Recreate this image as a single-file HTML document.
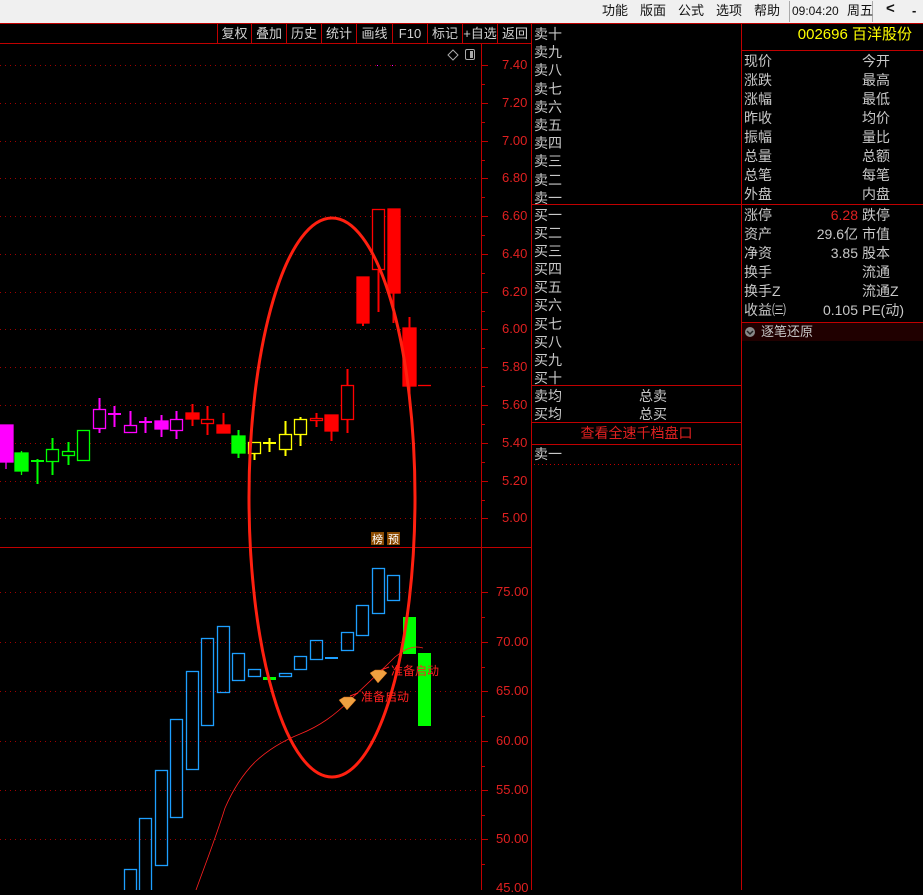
<!DOCTYPE html>
<html><head><meta charset="utf-8">
<style>
*{margin:0;padding:0;box-sizing:border-box}
body{width:923px;height:890px;background:#000;overflow:hidden;position:relative;font-family:"Liberation Sans","Noto Sans CJK SC",sans-serif;font-size:13px;color:#c8c8c8}
.a{position:absolute;white-space:nowrap;line-height:16px}
#top{position:absolute;left:0;top:0;width:923px;height:23px;background:#f0f0f0;color:#111}
#top span{position:absolute;top:3px;font-size:13px;line-height:16px}
.tb{position:absolute;top:24px;height:19px;line-height:19px;font-size:13px;color:#d0d0d0;text-align:center;border-left:1px solid #c00000}
.r{color:#e02020}
.ax{position:absolute;left:502px;font-size:13px;color:#e02020;line-height:14px}
</style></head><body>
<div id="top">
<span style="left:602px">功能</span><span style="left:640px">版面</span><span style="left:678px">公式</span><span style="left:716px">选项</span><span style="left:754px">帮助</span>
<div style="position:absolute;left:789px;top:1px;width:84px;height:21px;border-left:1px solid #aaa;border-right:1px solid #aaa"></div>
<span style="left:792px;font-size:12px">09:04:20</span><span style="left:847px">周五</span>
<span style="left:886px;font-weight:bold;font-size:15px;top:1px">&lt;</span><span style="left:912px;font-weight:bold">-</span>
</div>

<svg style="position:absolute;left:0;top:0" width="923" height="890">
<g stroke="#c00000" stroke-width="1" fill="none">
<line x1="0" y1="23.5" x2="923" y2="23.5"/>
<line x1="0" y1="43.5" x2="532" y2="43.5"/>
<line x1="481.5" y1="43" x2="481.5" y2="890"/>
<line x1="531.5" y1="23" x2="531.5" y2="890"/>
<line x1="741.5" y1="23" x2="741.5" y2="890"/>
<line x1="0" y1="547.5" x2="532" y2="547.5"/>
<line x1="741" y1="50.5" x2="923" y2="50.5"/>
<line x1="532" y1="204.5" x2="923" y2="204.5"/>
<line x1="532" y1="385.5" x2="741" y2="385.5"/>
<line x1="532" y1="422.5" x2="741" y2="422.5"/>
<line x1="532" y1="444.5" x2="741" y2="444.5"/>
<line x1="741" y1="322.5" x2="923" y2="322.5"/>
</g>
<rect x="742" y="323" width="181" height="18" fill="#200000"/>
<circle cx="750" cy="332" r="5" fill="#888"/><path d="M747 331l3 3 3-3" stroke="#222" stroke-width="1.5" fill="none"/>
<line x1="534" y1="464.5" x2="740" y2="464.5" stroke="#c00000" stroke-dasharray="1 3"/>
<g stroke="#a00000" stroke-dasharray="1 4">
<line x1="0" y1="65.5" x2="480" y2="65.5"/><line x1="0" y1="103.5" x2="480" y2="103.5"/><line x1="0" y1="141.5" x2="480" y2="141.5"/><line x1="0" y1="178.5" x2="480" y2="178.5"/><line x1="0" y1="216.5" x2="480" y2="216.5"/><line x1="0" y1="254.5" x2="480" y2="254.5"/><line x1="0" y1="292.5" x2="480" y2="292.5"/><line x1="0" y1="329.5" x2="480" y2="329.5"/><line x1="0" y1="367.5" x2="480" y2="367.5"/><line x1="0" y1="405.5" x2="480" y2="405.5"/><line x1="0" y1="443.5" x2="480" y2="443.5"/><line x1="0" y1="481.5" x2="480" y2="481.5"/><line x1="0" y1="518.5" x2="480" y2="518.5"/>
<line x1="0" y1="592.5" x2="480" y2="592.5"/><line x1="0" y1="642.5" x2="480" y2="642.5"/><line x1="0" y1="691.5" x2="480" y2="691.5"/><line x1="0" y1="741.5" x2="480" y2="741.5"/><line x1="0" y1="790.5" x2="480" y2="790.5"/><line x1="0" y1="839.5" x2="480" y2="839.5"/>
</g>
<g stroke="#c00000">
<path d="M482 65.5h6M482 84.5h3M482 103.5h6M482 122.5h3M482 141.5h6M482 160.5h3M482 178.5h6M482 197.5h3M482 216.5h6M482 235.5h3M482 254.5h6M482 273.5h3M482 292.5h6M482 311.5h3M482 329.5h6M482 348.5h3M482 367.5h6M482 386.5h3M482 405.5h6M482 424.5h3M482 443.5h6M482 462.5h3M482 481.5h6M482 500.5h3M482 518.5h6"/>
<path d="M482 592.5h6M482 617.5h3M482 642.5h6M482 667.5h3M482 691.5h6M482 716.5h3M482 741.5h6M482 766.5h3M482 790.5h6M482 815.5h3M482 839.5h6M482 864.5h3"/>
</g>
<g stroke-width="1.3">
<g fill="#ff00ff" stroke="#ff00ff"><line x1="6" y1="462" x2="6" y2="469"/><rect x="0" y="425" width="13" height="37"/></g>
<g fill="#00ff00" stroke="#00ff00"><line x1="21.5" y1="451" x2="21.5" y2="475"/><rect x="15" y="453" width="13" height="18"/>
<line x1="37.5" y1="459" x2="37.5" y2="484" stroke-width="2"/><line x1="31" y1="461" x2="44" y2="461" stroke-width="2"/>
<line x1="52.5" y1="438" x2="52.5" y2="475" stroke-width="2"/><rect x="46.5" y="449.5" width="12" height="12" fill="#000"/>
<line x1="68.5" y1="442" x2="68.5" y2="465" stroke-width="2"/><rect x="62.5" y="451.5" width="12" height="4" fill="#000"/>
<rect x="77.5" y="430.5" width="12" height="30" fill="#000"/></g>
<g stroke="#ff00ff" fill="#000">
<line x1="99.5" y1="398" x2="99.5" y2="433" stroke-width="2"/><rect x="93.5" y="409.5" width="12" height="19"/>
<line x1="114.5" y1="406" x2="114.5" y2="427" stroke-width="2"/><line x1="108" y1="414" x2="121" y2="414" stroke-width="2"/>
<line x1="130.5" y1="411" x2="130.5" y2="425" stroke-width="2"/><rect x="124.5" y="425.5" width="12" height="7"/>
<line x1="145.5" y1="417" x2="145.5" y2="433" stroke-width="2"/><line x1="139" y1="422" x2="152" y2="422" stroke-width="2"/>
<line x1="161.5" y1="415" x2="161.5" y2="437" stroke-width="2"/><rect x="155" y="421" width="13" height="8" fill="#ff00ff"/>
<line x1="176.5" y1="411" x2="176.5" y2="439" stroke-width="2"/><rect x="170.5" y="419.5" width="12" height="11"/></g>
<g stroke="#ff0000" fill="#000">
<line x1="192.5" y1="404" x2="192.5" y2="426" stroke-width="2"/><rect x="186" y="413" width="13" height="6" fill="#f00"/>
<line x1="207.5" y1="406" x2="207.5" y2="435" stroke-width="2"/><rect x="201.5" y="419.5" width="12" height="4"/>
<line x1="223.5" y1="413" x2="223.5" y2="425" stroke-width="2"/><rect x="217" y="425" width="13" height="8" fill="#f00"/></g>
<g fill="#00ff00" stroke="#00ff00"><line x1="238.5" y1="430" x2="238.5" y2="458" stroke-width="2"/><rect x="232" y="436" width="13" height="17"/></g>
<g stroke="#ffff00" fill="#000">
<line x1="254.5" y1="453" x2="254.5" y2="460" stroke-width="2"/><rect x="248.5" y="442.5" width="12" height="11"/>
<line x1="269.5" y1="438" x2="269.5" y2="452" stroke-width="2"/><line x1="263" y1="443" x2="276" y2="443" stroke-width="2"/>
<line x1="285.5" y1="421" x2="285.5" y2="456" stroke-width="2"/><rect x="279.5" y="434.5" width="12" height="15"/>
<line x1="300.5" y1="417" x2="300.5" y2="446" stroke-width="2"/><rect x="294.5" y="419.5" width="12" height="15"/></g>
<g stroke="#ff0000" fill="#000">
<line x1="316.5" y1="413" x2="316.5" y2="427" stroke-width="2"/><rect x="310.5" y="418.5" width="12" height="2"/>
<line x1="331.5" y1="431" x2="331.5" y2="441" stroke-width="2"/><rect x="325" y="415" width="13" height="16" fill="#f00"/>
<line x1="347.5" y1="369" x2="347.5" y2="433" stroke-width="2"/><rect x="341.5" y="385.5" width="12" height="34"/>
<rect x="357" y="277" width="12" height="46" fill="#f00"/><line x1="363" y1="323" x2="363" y2="326" stroke-width="2"/>
<line x1="378.5" y1="209" x2="378.5" y2="312" stroke-width="2"/><rect x="372.5" y="209.5" width="12" height="60"/>
<line x1="393.5" y1="209" x2="393.5" y2="323" stroke-width="2"/><rect x="388" y="209" width="12" height="84" fill="#f00"/>
<line x1="409.5" y1="317" x2="409.5" y2="393" stroke-width="2"/><rect x="403" y="328" width="13" height="58" fill="#f00"/>
<line x1="418" y1="385.5" x2="431" y2="385.5"/></g>
</g>
<path d="M453 50l5 5-5 5-5-5z" stroke="#aaa" fill="none"/>
<rect x="465.5" y="49.5" width="9" height="10" rx="1.5" stroke="#aaa" fill="none"/><rect x="470" y="51" width="3" height="7" fill="#aaa"/>
<rect x="377" y="65" width="1" height="1" fill="#f0f"/><rect x="392" y="65" width="1" height="1" fill="#f0f"/>
<g stroke="#1e9fff" stroke-width="1.3" fill="none">
<rect x="124.5" y="869.5" width="12" height="30"/><rect x="139.5" y="818.5" width="12" height="80"/><rect x="155.5" y="770.5" width="12" height="95"/><rect x="170.5" y="719.5" width="12" height="98"/><rect x="186.5" y="671.5" width="12" height="98"/><rect x="201.5" y="638.5" width="12" height="87"/><rect x="217.5" y="626.5" width="12" height="66"/><rect x="232.5" y="653.5" width="12" height="27"/><rect x="248.5" y="669.5" width="12" height="7"/><rect x="279.5" y="673.5" width="12" height="3"/><rect x="294.5" y="656.5" width="12" height="13"/><rect x="310.5" y="640.5" width="12" height="19"/><line x1="325" y1="658" x2="338" y2="658" stroke-width="2"/><rect x="341.5" y="632.5" width="12" height="18"/><rect x="356.5" y="605.5" width="12" height="30"/><rect x="372.5" y="568.5" width="12" height="45"/><rect x="387.5" y="575.5" width="12" height="25"/>
</g>
<rect x="263" y="677" width="13" height="3" fill="#00ff00"/>
<rect x="403" y="617" width="13" height="37" fill="#00ff00"/>
<rect x="418" y="653" width="13" height="73" fill="#00ff00"/>
<path d="M196 890 C205 865 215 840 225 808 C235 785 245 772 255 762 C270 748 285 740 300 734 C320 726 335 715 350 700 C365 686 380 672 395 657 C405 649 413 645 423 648" stroke="#ff2020" stroke-width="0.8" fill="none"/>
<path d="M339 700 L344 697 L352 697 L356 700 L347 710Z" fill="#f0a040" stroke="#c06010" stroke-width="0.5"/>
<path d="M370 673 L375 670 L383 670 L387 673 L378 683Z" fill="#f0a040" stroke="#c06010" stroke-width="0.5"/>
<line x1="350" y1="696" x2="358" y2="693" stroke="#f22"/><line x1="381" y1="670" x2="389" y2="667" stroke="#f22"/>
<text x="361" y="701" fill="#ff2020" font-size="12" font-family="Liberation Sans,Noto Sans CJK SC,sans-serif">准备启动</text>
<text x="391" y="675" fill="#ff2020" font-size="12" font-family="Liberation Sans,Noto Sans CJK SC,sans-serif">准备启动</text>
<rect x="371" y="532" width="13" height="13" fill="#8a4a00"/><rect x="387" y="532" width="13" height="13" fill="#8a4a00"/>
<text x="372" y="543" fill="#fff" font-size="11" font-family="Noto Sans CJK SC,sans-serif">榜</text>
<text x="388" y="543" fill="#fff" font-size="11" font-family="Noto Sans CJK SC,sans-serif">预</text>
<ellipse cx="332" cy="497.5" rx="83" ry="279.5" stroke="#ff2010" stroke-width="3" fill="none"/>
</svg>

<div class="tb" style="left:217px;width:34px">复权</div><div class="tb" style="left:251px;width:35px">叠加</div><div class="tb" style="left:286px;width:35px">历史</div><div class="tb" style="left:321px;width:35px">统计</div><div class="tb" style="left:356px;width:36px">画线</div><div class="tb" style="left:392px;width:35px">F10</div><div class="tb" style="left:427px;width:35px">标记</div><div class="tb" style="left:462px;width:35px">+自选</div><div class="tb" style="left:497px;width:35px">返回</div>

<div class="ax" style="top:58px">7.40</div><div class="ax" style="top:96px">7.20</div><div class="ax" style="top:134px">7.00</div><div class="ax" style="top:171px">6.80</div><div class="ax" style="top:209px">6.60</div><div class="ax" style="top:247px">6.40</div><div class="ax" style="top:285px">6.20</div><div class="ax" style="top:322px">6.00</div><div class="ax" style="top:360px">5.80</div><div class="ax" style="top:398px">5.60</div><div class="ax" style="top:436px">5.40</div><div class="ax" style="top:474px">5.20</div><div class="ax" style="top:511px">5.00</div>
<div class="ax" style="top:585px;left:496px">75.00</div><div class="ax" style="top:635px;left:496px">70.00</div><div class="ax" style="top:684px;left:496px">65.00</div><div class="ax" style="top:734px;left:496px">60.00</div><div class="ax" style="top:783px;left:496px">55.00</div><div class="ax" style="top:832px;left:496px">50.00</div><div class="ax" style="top:881px;left:496px">45.00</div>

<div class="a" style="left:534px;top:25px;line-height:18.2px;font-size:14px">卖十<br>卖九<br>卖八<br>卖七<br>卖六<br>卖五<br>卖四<br>卖三<br>卖二<br>卖一</div>
<div class="a" style="left:534px;top:206px;line-height:18.1px;font-size:14px">买一<br>买二<br>买三<br>买四<br>买五<br>买六<br>买七<br>买八<br>买九<br>买十</div>
<div class="a" style="left:534px;top:387px;line-height:18px;font-size:14px">卖均<br>买均</div>
<div class="a" style="left:639px;top:387px;line-height:18px;font-size:14px">总卖<br>总买</div>
<div class="a r" style="left:532px;width:209px;text-align:center;top:425px;font-size:14px">查看全速千档盘口</div>
<div class="a" style="left:534px;top:446px;font-size:14px">卖一</div>

<div class="a" style="left:742px;top:27px;width:170px;text-align:right;color:#ffff00;font-size:15px">002696 百洋股份</div>
<div class="a" style="left:744px;top:52px;line-height:19px;font-size:14px">现价<br>涨跌<br>涨幅<br>昨收<br>振幅<br>总量<br>总笔<br>外盘</div>
<div class="a" style="left:862px;top:52px;line-height:19px;font-size:14px">今开<br>最高<br>最低<br>均价<br>量比<br>总额<br>每笔<br>内盘</div>
<div class="a" style="left:744px;top:206px;line-height:19px;font-size:14px">涨停<br>资产<br>净资<br>换手<br>换手Z<br>收益㈢</div>
<div class="a" style="left:800px;width:58px;text-align:right;top:206px;line-height:19px;font-size:14px"><span class="r">6.28</span><br>29.6亿<br>3.85<br>&nbsp;<br>&nbsp;<br>0.105</div>
<div class="a" style="left:862px;top:206px;line-height:19px;font-size:14px">跌停<br>市值<br>股本<br>流通<br>流通Z<br>PE(动)</div>
<div class="a" style="left:761px;top:324px">逐笔还原</div>
</body></html>
